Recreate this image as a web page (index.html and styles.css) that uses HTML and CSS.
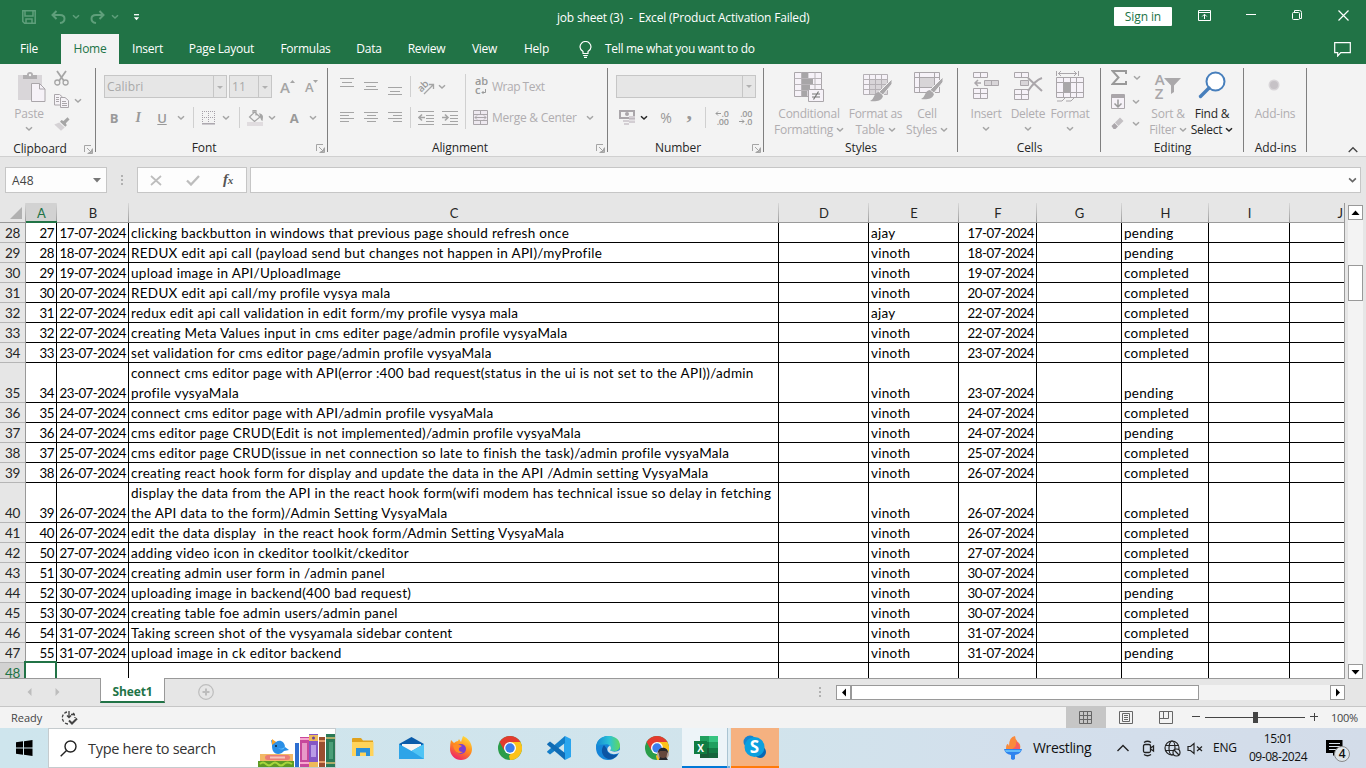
FILE: index.html
```html
<!DOCTYPE html>
<html lang="en">
<head>
<meta charset="utf-8">
<title>job sheet (3) - Excel</title>
<link rel="stylesheet" href="styles.css">
</head>
<body>
<svg class="sprite" aria-hidden="true">
  <symbol id="chev" viewBox="0 0 8 6"><path d="M1 1.2l3 2.8 3-2.8" fill="none" stroke="currentColor" stroke-width="1.5"/></symbol>
  <symbol id="launch" viewBox="0 0 9 9"><path d="M.5 7V.5H7M3 3l4 4M8.500 3.500v5h-5M7.500 4.500v3h-3" fill="none" stroke="#a5a5a5"/></symbol>
  <symbol id="chrome" viewBox="0 0 24 24"><circle cx="12" cy="12" r="12" fill="#2a9d4a"/><path d="M22.400 6A12 12 0 0 1 12 24l-1-4 6-8-4-6z" fill="#fcc21b"/><path d="M1.600 6A12 12 0 0 1 22.400 6H12L6 14z" fill="#e33b2e"/><circle cx="12" cy="12" r="6" fill="#fff"/><circle cx="12" cy="12" r="4.700" fill="#3b7ded"/></symbol>
</svg>

<header class="titlebar">
  <div class="qat">
    <svg width="14" height="14" viewBox="0 0 14 14" fill="none" stroke="#5f9f7b" stroke-width="1.500"><path d="M.8.8h12.400v12.400H2.600L.8 11.500zM3 1v5h8V1M4 13V9h6v4"/></svg>
    <svg width="15" height="14" viewBox="0 0 15 14" fill="none" stroke="#5f9f7b" stroke-width="2"><path d="M5.500 1L1.500 5l4 4M2 5h7c6 0 6 7 0 8"/></svg>
    <svg class="qc" width="8" height="6"><use href="#chev"/></svg>
    <svg width="15" height="14" viewBox="0 0 15 14" fill="none" stroke="#5f9f7b" stroke-width="2"><path d="M9.500 1l4 4-4 4M13 5H6C0 5 0 12 6 13"/></svg>
    <svg class="qc" width="8" height="6"><use href="#chev"/></svg>
    <svg class="more" width="7" height="7" viewBox="0 0 7 7"><path d="M1 .7h5" stroke="#fff" stroke-width="1.300"/><path d="M.8 3.200h5.400L3.500 6.200z" fill="#fff"/></svg>
  </div>
  <div class="doc">job sheet (3)&nbsp; -&nbsp; Excel (Product Activation Failed)</div>
  <button class="signin">Sign in</button>
  <div class="winbtns">
    <svg width="13" height="11" viewBox="0 0 13 11" fill="none" stroke="#fff"><path d="M.5.5h12v10H.5zM.5 2.500h12M6.500 9V4.500M4.200 6.500l2.300-2.300 2.300 2.300"/></svg>
    <svg width="10" height="11" viewBox="0 0 10 11" stroke="#fff"><path d="M0 4.500h10"/></svg>
    <svg width="10" height="11" viewBox="0 0 10 11" fill="none" stroke="#fff"><rect x=".5" y="2.500" width="7" height="7" rx="1"/><path d="M2.500 2.500V.5h5q2 0 2 2v6H8"/></svg>
    <svg width="11" height="11" viewBox="0 0 11 11" stroke="#fff" stroke-width="1.200"><path d="M.5.5l10 10M10.500.5l-10 10"/></svg>
  </div>
</header>

<nav class="tabs">
  <span class="tab">File</span><span class="tab active">Home</span><span class="tab">Insert</span><span class="tab">Page Layout</span><span class="tab">Formulas</span><span class="tab">Data</span><span class="tab">Review</span><span class="tab">View</span><span class="tab">Help</span>
  <svg class="bulb" width="13" height="17" viewBox="0 0 13 17" fill="none" stroke="#fff" stroke-width="1.200"><path d="M4 12.500V10.500C2 9 1 7.500 1 6a5.500 5.500 0 0 1 11 0c0 1.500-1 3-3 4.500v2zM4.200 14.500h4.600M5 16.400h3"/></svg>
  <span class="tell">Tell me what you want to do</span>
  <svg class="comment" width="17" height="15" viewBox="0 0 17 15" fill="none" stroke="#fff" stroke-width="1.200"><path d="M.7.7h15.600v10H6.800L3.700 14v-3.300h-3z"/></svg>
</nav>

<section class="ribbon">
  <div class="group g-clip">
    <div class="body">
      <div class="big paste">
        <svg width="29" height="32" viewBox="0 0 29 32"><path d="M1 5h24v25H1z" fill="#d9d6d9"/><path d="M6 5h4q0-3 3-3t3 3h4v4H6z" fill="#b0aeb0"/><circle cx="13" cy="5" r="1.200" fill="#f3f3f3"/><path d="M14.500 13.500h8l5.500 5.500v12.500H14.500z" fill="#f6f2f8" stroke="#aaa6aa"/><path d="M22.500 13.500V19H28" fill="none" stroke="#aaa6aa"/></svg>
        <span>Paste</span><svg class="ch" width="8" height="6"><use href="#chev"/></svg>
      </div>
      <div class="clipcol">
        <div><svg width="15" height="16" viewBox="0 0 15 16" fill="none" stroke="#a5a5a5"><path d="M3 1l7 10M12 1L5 11" stroke-width="1.800"/><circle cx="3.300" cy="12.500" r="2.500" stroke-width="1.300"/><circle cx="11.600" cy="12.500" r="2.500" stroke-width="1.300"/></svg></div>
        <div><svg width="15" height="14" viewBox="0 0 15 14" fill="#f6f3f7" stroke="#aaa6aa"><path d="M.5.5h5L8.500 3v8h-8zM2 3.500h3M2 5.500h3M2 7.500h3"/><path d="M6.500 3.500H11l3.500 3v7h-8zM8 7.500h4M8 9.500h5M8 11.500h5"/></svg><svg class="ch cc" width="8" height="6"><use href="#chev"/></svg></div>
        <div><svg width="16" height="14" viewBox="0 0 16 14"><path d="M15.500 2.500L13.500.3 9.500 4l-2-1L6 4.700l5.300 5 1.500-1.500-1-2z" fill="#a5a5a5"/><path d="M5.200 5.500L.3 7.500 7 13.800l3.700-3.300z" fill="#d5d2d5"/></svg></div>
      </div>
    </div>
    <div class="label">Clipboard<svg width="9" height="9"><use href="#launch"/></svg></div>
  </div>

  <div class="group g-font">
    <div class="body stack">
      <div class="row font1">
        <div class="combo"><span>Calibri</span><i></i></div>
        <div class="combo"><span>11</span><i></i></div>
        <div class="grow"><b>A</b><svg width="5" height="3"><path d="M0 3L2.500 0 5 3z" fill="#a5a5a5"/></svg></div>
        <div class="grow small"><b>A</b><svg width="5" height="3"><path d="M0 0h5L2.500 3z" fill="#a5a5a5"/></svg></div>
      </div>
      <div class="row font2">
        <b>B</b><em>I</em><u>U</u><svg class="ch" width="8" height="6"><use href="#chev"/></svg><s></s>
        <svg width="14" height="14" viewBox="0 0 14 14" fill="none" stroke="#a5a0a8"><path d="M.5 0v12M6.500 0v12M12.500 0v12M0 .5h13M0 6.500h13" stroke-dasharray="1 1"/><path d="M0 12.800h13" stroke-width="1.400"/></svg>
        <svg class="ch" width="8" height="6"><use href="#chev"/></svg><s></s>
        <svg width="17" height="16" viewBox="0 0 17 16" fill="none" stroke="#a5a5a5" stroke-width="1.200"><path d="M7.500 2L13 7l-5.500 4.500-5-4.500zM6 4V.6h3v5"/><path d="M13 4c3 1 2.500 3 2 6-1-1-1.500-3-2-6z" fill="#a5a5a5"/><path d="M0 14h16" stroke="#e0dcdf" stroke-width="4"/></svg>
        <svg class="ch" width="8" height="6"><use href="#chev"/></svg><b>A</b><svg class="ch" width="8" height="6"><use href="#chev"/></svg>
      </div>
    </div>
    <div class="label">Font<svg width="9" height="9"><use href="#launch"/></svg></div>
  </div>

  <div class="group g-align">
    <div class="body alignbody">
      <div class="stack">
        <div class="row al1">
          <svg width="14" height="20" stroke="#a5a5a5"><path d="M0 1.500h14M2 5.500h10M0 9.500h14"/></svg>
          <svg width="14" height="20" stroke="#a5a5a5"><path d="M0 5.500h14M2 9.500h10M0 12.500h14"/></svg>
          <svg width="14" height="20" stroke="#a5a5a5"><path d="M0 10.500h14M2 14.500h10M0 17.500h14"/></svg><s></s>
          <svg width="17" height="16" viewBox="0 0 17 16" overflow="visible"><text class="abt" x="0" y="10" transform="rotate(-45 6 8)">ab</text><path d="M6 15l9-9M11 5.500h4.500V10" fill="none" stroke="#a5a5a5" stroke-width="1.300"/></svg>
          <svg class="ch" width="8" height="6"><use href="#chev"/></svg>
        </div>
        <div class="row al2">
          <svg width="14" height="11" stroke="#a5a5a5"><path d="M0 .5h14M0 3.500h9M0 6.500h14M0 9.500h9"/></svg>
          <svg width="14" height="11" stroke="#a5a5a5"><path d="M0 .5h14M3 3.500h9M0 6.500h14M3 9.500h9"/></svg>
          <svg width="14" height="11" stroke="#a5a5a5"><path d="M0 .5h14M5 3.500h9M0 6.500h14M5 9.500h9"/></svg><s></s>
          <svg width="16" height="14" fill="none" stroke="#a5a5a5"><path d="M0 .5h16M8 4.500h8M8 7.500h8M8 10.500h8M0 13.500h16"/><path d="M7 6.500H1M4 3.500l-3 3 3 3" stroke-width="1.600"/></svg>
          <svg width="16" height="14" fill="none" stroke="#a5a5a5"><path d="M0 .5h16M8 4.500h8M8 7.500h8M8 10.500h8M0 13.500h16"/><path d="M0 6.500h6M3 3.500l3 3-3 3" stroke-width="1.600"/></svg>
        </div>
      </div>
      <s class="tall"></s>
      <div class="stack wrapcol">
        <div class="row"><div class="abc"><span>ab</span><span>c<svg width="5" height="6" fill="none" stroke="#999"><path d="M4.500 0v3.500H1M2.500 2L1 3.500 2.500 5"/></svg></span></div><span class="wt">Wrap Text</span></div>
        <div class="row"><svg width="15" height="15" fill="#eee9f0" stroke="#aaa6aa"><path d="M.5.5h14v14H.5zM.5 4.500h14M.5 10.500h14M7.500.5v4M7.500 10.500v4M2 7.500h11M4 5.500l-2 2 2 2M11 5.500l2 2-2 2"/></svg><span>Merge &amp; Center</span><svg class="ch" width="8" height="6"><use href="#chev"/></svg></div>
      </div>
    </div>
    <div class="label">Alignment<svg width="9" height="9"><use href="#launch"/></svg></div>
  </div>

  <div class="group g-num">
    <div class="body stack">
      <div class="row num1"><div class="combo"><span></span><i></i></div></div>
      <div class="row num2">
        <svg width="17" height="17"><path d="M1 2h14v7H1z" fill="#f3f3f3" stroke="#aaa6aa" stroke-width="2"/><circle cx="8" cy="5" r="2" fill="#aaa6aa"/><path d="M10 8h6M10 10.500h6M10 13h6M4 12h6M5 15h5" stroke="#d3ced3" stroke-width="2"/></svg>
        <svg class="ch dark" width="8" height="6"><use href="#chev"/></svg><span class="pct">%</span><span class="comma">,</span><s></s>
        <div class="dec"><span><svg width="6" height="5" fill="none" stroke="#999"><path d="M6 2.500H1M3 .5l-2 2 2 2"/></svg>.0</span><span>.00</span></div>
        <div class="dec"><span>.00</span><span><svg width="6" height="5" fill="none" stroke="#999"><path d="M0 2.500h5M3 .5l2 2-2 2"/></svg>.0</span></div>
      </div>
    </div>
    <div class="label">Number<svg width="9" height="9"><use href="#launch"/></svg></div>
  </div>

  <div class="group g-styles">
    <div class="body">
      <div class="big"><svg width="30" height="32" viewBox="0 0 30 32"><path d="M.5 2.500h27v24H.5z" fill="#f6f2f8" stroke="#aaa6aa"/><path d="M.5 8.500h27M.5 14.500h27M.5 20.500h27M7.500 2.500v24M14 2.500v24M21 2.500v24" stroke="#b9b5b9"/><path d="M8 3h6v5H8zM8 9h11v5H8zM8 15h8v5H8zM8 21h5v5H8z" fill="#a7a5a7"/><path d="M14.500 19.500h15v12h-15z" fill="#f6f2f8" stroke="#aaa6aa"/><path d="M18 24h8M18 27h8M24.500 21.500l-5 8" stroke="#777" stroke-width="1.200"/></svg><span>Conditional</span><span>Formatting<svg class="ch" width="8" height="6"><use href="#chev"/></svg></span></div>
      <div class="big"><svg width="30" height="32" viewBox="0 0 30 32"><path d="M.5 4.500h24v20H.5z" fill="#f6f2f8"/><path d="M7 10h17v14H7z" fill="#d8d5d8"/><path d="M.5 4.500h24v20H.5zM.5 9.500h24M.5 14.500h24M.5 19.500h24M6.500 4.500v20M12.500 4.500v20M18.500 4.500v20" fill="none" stroke="#b5b1b5"/><path d="M29 9v5l-9 11-4-3z" fill="#aaa8aa" stroke="#f3f3f3"/><path d="M16 22l4 4c-1 5-8 6-13 5 5-2 3-8 9-9z" fill="#aaa8aa"/></svg><span>Format as</span><span>Table<svg class="ch" width="8" height="6"><use href="#chev"/></svg></span></div>
      <div class="big"><svg width="30" height="32" viewBox="0 0 30 32"><path d="M.5 2.500h25v20H.5z" fill="#f6f2f8"/><path d="M6 7h15v11H6z" fill="#d8d5d8"/><path d="M.5 2.500h25v20H.5zM.5 7.500h25M.5 17.500h25M5.500 2.500v20M20.500 2.500v20" fill="none" stroke="#aaa6aa"/><path d="M29 7v5l-9 11-4-3z" fill="#aaa8aa" stroke="#f3f3f3"/><path d="M16 20l4 4c-1 5-8 6-13 5 5-2 3-8 9-9z" fill="#aaa8aa"/></svg><span>Cell</span><span>Styles<svg class="ch" width="8" height="6"><use href="#chev"/></svg></span></div>
    </div>
    <div class="label plain">Styles</div>
  </div>

  <div class="group g-cells">
    <div class="body">
      <div class="big"><svg width="28" height="32" viewBox="0 0 28 32" fill="#f6f2f8" stroke="#aaa6aa"><path d="M1.500 2.500h14v5h-14zM8.500 2.500v5M1.500 18.500h14v10h-14zM8.500 18.500v10M1.500 23.500h14"/><path d="M12.500 10.500h14v5h-14zM19.500 10.500v5" fill="#d8d5d8"/><path d="M9 13H3M6 10l-3 3 3 3" fill="none" stroke-width="1.500"/></svg><span>Insert</span><svg class="ch" width="8" height="6"><use href="#chev"/></svg></div>
      <div class="big"><svg width="30" height="32" viewBox="0 0 30 32" fill="#f6f2f8" stroke="#aaa6aa"><path d="M1.500 2.500h14v5h-14zM8.500 2.500v5M1.500 19.500h14v10h-14zM8.500 19.500v10M1.500 24.500h14"/><path d="M7.500 10.500h8v5h-8z" fill="#d8d5d8"/><path d="M15 8l14 13M29 8c-6 2-10 7-14 13" fill="none" stroke-width="2"/></svg><span>Delete</span><svg class="ch" width="8" height="6"><use href="#chev"/></svg></div>
      <div class="big"><svg width="28" height="32" viewBox="0 0 28 32" fill="#f6f2f8" stroke="#aaa6aa"><path d="M.5 7.500h27v20H.5z"/><path d="M8 13h7v9H8z" fill="#a9a7a9" stroke="none"/><path d="M.5 12.500h27M.5 22.500h27M7.500 7.500v20M14.500 7.500v20M20.500 7.500v20M.5 1v5M22.500 1v5M2 3.500h19M5 1L2.500 3.500 5 6M18 1l2.500 2.500L18 6M1 31h5l3-3M10 31h5l3-3" fill="none"/></svg><span>Format</span><svg class="ch" width="8" height="6"><use href="#chev"/></svg></div>
    </div>
    <div class="label plain">Cells</div>
  </div>

  <div class="group g-edit">
    <div class="body">
      <div class="editcol">
        <div><svg width="16" height="15"><path d="M15 4V1H1.500l6 6.500-6 6.500H15v-3" fill="none" stroke="#999" stroke-width="2"/></svg><svg class="ch" width="8" height="6"><use href="#chev"/></svg></div>
        <div><svg width="15" height="15"><path d="M.5.5h13v14H.5z" fill="#f6f2f8" stroke="#aaa6aa"/><path d="M1 1h12v3H1z" fill="#aaa6aa"/><path d="M7 5.500v7M3.500 9.500L7 13l3.500-3.500" fill="none" stroke="#999" stroke-width="1.500"/></svg><svg class="ch" width="8" height="6"><use href="#chev"/></svg></div>
        <div><svg width="15" height="14"><path d="M9 .5l3.500 3.500-5 5L4 5.500z" fill="#c3c0c3"/><path d="M3.500 6L7 9.500 4.500 12h-2L.5 9z" fill="#aaa6aa"/></svg><svg class="ch" width="8" height="6"><use href="#chev"/></svg></div>
      </div>
      <div class="big"><div class="az"><b>A<br>Z</b><svg width="17" height="16"><path d="M0 0h17l-7 7.500V14l-3 2V7.500z" fill="#aaa8aa"/></svg></div><span>Sort &amp;</span><span>Filter<svg class="ch" width="8" height="6"><use href="#chev"/></svg></span></div>
      <div class="big on"><svg width="28" height="32" viewBox="0 0 28 32"><circle cx="17.500" cy="11.500" r="9" fill="#fff" stroke="#477fbc" stroke-width="2"/><path d="M2.500 26.500l8.500-8.500" stroke="#477fbc" stroke-width="3.400" stroke-linecap="round"/></svg><span>Find &amp;</span><span>Select<svg class="ch dark" width="8" height="6"><use href="#chev"/></svg></span></div>
    </div>
    <div class="label plain">Editing</div>
  </div>

  <div class="group g-add">
    <div class="body"><div class="big"><svg width="30" height="32"><circle cx="14" cy="15" r="5.500" fill="#d8d5d8"/><circle cx="14" cy="15" r="4" fill="#c6c2c6"/></svg><span>Add-ins</span></div></div>
    <div class="label plain">Add-ins</div>
  </div>
  <svg class="collapse" width="10" height="7"><path d="M.7 6L5 1.700 9.300 6" fill="none" stroke="#444" stroke-width="1.300"/></svg>
</section>

<section class="formulabar">
  <div class="namebox"><span>A48</span><svg width="8" height="5"><path d="M0 0h8L4 4.500z" fill="#777"/></svg></div>
  <div class="dots"><i></i><i></i><i></i></div>
  <div class="fx">
    <svg width="12" height="11"><path d="M1 1l10 9M11 1L1 10" stroke="#bdbdbd" stroke-width="1.700"/></svg>
    <svg width="14" height="11"><path d="M1 5.500l4 4L13 1" fill="none" stroke="#bdbdbd" stroke-width="2.300"/></svg>
    <span>f<small>x</small></span>
  </div>
  <div class="formula"><svg class="ch" width="9" height="7"><use href="#chev"/></svg></div>
</section>

<main class="work">
  <div class="sheet">
    <div class="r head"><div class="corner"><svg width="12" height="12"><path d="M12 0v12H0z" fill="#b1b1b1"/></svg></div><div class="sel">A</div><div>B</div><div>C</div><div>D</div><div>E</div><div>F</div><div>G</div><div>H</div><div>I</div><div class="j">J</div></div>
    <div class="rows" id="rows"></div>
  </div>
  <div class="vscroll"><span class="btn"><svg width="9" height="6"><path d="M4.500.5L8.500 5h-8z"/></svg></span><div class="track"><div class="thumb"></div></div><span class="btn"><svg width="9" height="6"><path d="M4.500 5.500L.5 1h8z"/></svg></span></div>
</main>

<div class="sheettabs">
  <svg class="n1" width="5" height="8"><path d="M4.500 0v8L.5 4z" fill="#bdbdbd"/></svg>
  <svg class="n2" width="5" height="8"><path d="M.5 0v8l4-4z" fill="#bdbdbd"/></svg>
  <div class="stab">Sheet1</div>
  <svg class="plus" width="16" height="16" fill="none" stroke="#bdbdbd"><circle cx="8" cy="8" r="7.300" stroke-width="1.200"/><path d="M8 4.500v7M4.500 8h7" stroke-width="2"/></svg>
  <div class="dots"><i></i><i></i><i></i></div>
  <div class="hscroll"><span class="btn"><svg width="6" height="9"><path d="M5 .5v8L1 4.500z"/></svg></span><div class="thumb"></div><span class="btn end"><svg width="6" height="9"><path d="M1 .5v8l4-4z"/></svg></span></div>
</div>

<footer class="status">
  <span class="ready">Ready</span>
  <svg width="17" height="16" fill="none" stroke="#444" stroke-width="1.300"><path d="M6 2A6 6 0 0 0 3 12M7 14q-2 0-3-1M12 3q2 2 2 5" stroke-dasharray="3 1.500"/><path d="M8 1v6M6 5.500L8 7.500l2-2M10 4.500h4"/><path d="M8 10.500l3 3 5-5" stroke-width="2"/></svg>
  <div class="views">
    <span class="v on"><svg width="13" height="13" fill="none" stroke="#666"><path d="M.5.5h12v12H.5zM.5 4.500h12M.5 8.500h12M4.500.5v12M8.500.5v12"/></svg></span>
    <span class="v"><svg width="14" height="13" fill="none" stroke="#666"><path d="M.5.5h13v12H.5zM3.500 2.500h7v8h-7zM5 4.500h4M5 6.500h4M5 8.500h4"/></svg></span>
    <span class="v"><svg width="14" height="13" fill="none" stroke="#666"><path d="M.5.5h13v12H.5zM4.500.5v7M9.500.5v7M.5 7.500h9"/></svg></span>
  </div>
  <svg class="zoom" width="126" height="13"><path d="M0 5.500h8M13 6.500h100M118 5.500h8M122.500 2v8" stroke="#444"/><path d="M61 1h5v11h-5z" fill="#444"/></svg>
  <span class="pc">100%</span>
</footer>

<div class="taskbar">
  <div class="start"><svg width="17" height="16"><path d="M0 2.300l7-1v6.200H0zM8 1.200l8.500-1.200v7.500H8zM0 8.500h7v6.200l-7-1zM8 8.500h8.500V16L8 14.800z"/></svg></div>
  <div class="search">
    <svg width="17" height="17" fill="none" stroke="#222" stroke-width="1.400"><circle cx="10.500" cy="6.500" r="5.500"/><path d="M6.500 10.500L.7 16.300"/></svg>
    <span>Type here to search</span>
    <svg class="books" width="77" height="35" viewBox="0 0 77 35">
      <path d="M2 21h33v7H2z" fill="#f2b866"/><rect x="7" y="22" width="25" height="5" rx="2.500" fill="#ea7d77"/><path d="M12 24.500h15" stroke="#f8c6bd" stroke-width="2"/><path d="M0 28h36v7H0z" fill="#5d9a24"/><path d="M2 31q3-3 6 0t6 0 6 0 6 0 8 0" fill="none" stroke="#a5d63c" stroke-width="2"/>
      <path d="M14 12L13 7l5 2c4-3 9 0 9 5l4 3-5 1c-3 4-9 4-11 0-1-2-1-4-1-6z" fill="#2a8fe6"/><path d="M14 6l4 3-4 3z" fill="#f6a12b"/><circle cx="18" cy="13" r="1" fill="#123"/><path d="M20 15q5 2 7-2-1 6-7 2z" fill="#5fc0ff"/>
      <path d="M37 10h4v25h-4z" fill="#2d6ed0"/><path d="M42 4h9v31h-9z" fill="#c7489b"/><path d="M42 6h9M42 30h9" stroke="#f6a8cf" stroke-width="2"/><path d="M44 10h5v17h-5z" fill="#e89ac8"/>
      <path d="M51 1h9v34h-9z" fill="#8456c5"/><path d="M51 2h9v6h-9zM51 29h9v6h-9z" fill="#edba5a"/><path d="M53 12h5v12h-5z" fill="#b99be6"/><circle cx="55.500" cy="5" r="1.500" fill="#6a4298"/>
      <path d="M61 4h6v31h-6z" fill="#9b4f30"/><path d="M61 8h6M61 29h6" stroke="#e49a68" stroke-width="2"/><path d="M68 1h9v34h-9z" fill="#2a7a58"/><path d="M68 5h9M68 30h9" stroke="#d9bf70" stroke-width="1.500"/><path d="M71 9h4v17h-4z" fill="#4b9e78"/>
    </svg>
  </div>
  <div class="apps">
    <span class="app"><svg width="22" height="20" viewBox="0 0 22 20"><path d="M0 1q0-1 1-1h8l2 2.500h10v6H0z" fill="#e0a11c"/><path d="M0 4h21.500v14H0z" fill="#ffd35a"/><path d="M4 10h14v8h-4v-3.500H8V18H4z" fill="#2b8fd8"/></svg></span>
    <span class="app"><svg width="25" height="24" viewBox="0 0 25 24"><path d="M0 8L12.500 1 25 8v5H0z" fill="#0a5baa"/><path d="M3 8h19v8H3z" fill="#f5f5f5"/><path d="M0 8l12.500 7L25 8v15H0z" fill="#2da4e8"/><path d="M25 8v15L12.500 15z" fill="#50c4f5"/></svg></span>
    <span class="app"><svg width="24" height="24" viewBox="0 0 24 24"><defs><linearGradient id="ff" x1=".8" y1="0" x2=".3" y2="1"><stop offset="0" stop-color="#ffe33d"/><stop offset=".5" stop-color="#ff8a1e"/><stop offset="1" stop-color="#ee1f6b"/></linearGradient></defs><path d="M2 4l3 3q2-2 4-2l1-2 2 3 2-6c5 2 9 7 9 13a11 11 0 0 1-22 0Q1 8 2 4z" fill="url(#ff)"/><circle cx="12" cy="13" r="5" fill="#7b3fd0"/><path d="M4 9q5-2 9 1l-3 2q-1 4 4 4c-4 3-9 0-10-7z" fill="#ff8c26"/></svg></span>
    <span class="app"><svg width="24" height="24"><use href="#chrome"/></svg></span>
    <span class="app"><svg width="24" height="24" viewBox="0 0 24 24"><path d="M18 0l6 3v18l-6 3-1-6V6z" fill="#2aa5ee"/><path d="M18 0v7L3 18.500.5 16.500 0 15.500z" fill="#147ec8"/><path d="M18 24v-7L3 5.500.5 7.500 0 8.500z" fill="#0f6cb5"/></svg></span>
    <span class="app"><svg width="24" height="24" viewBox="0 0 24 24"><defs><linearGradient id="eg"><stop offset="0" stop-color="#1387d5"/><stop offset=".55" stop-color="#2cc3d6"/><stop offset="1" stop-color="#62d85b"/></linearGradient></defs><circle cx="12" cy="12" r="12" fill="#1585d8"/><path d="M0 11C1-4 24-3 24 9.500c0 5-5 7-10 5 3-3-1-7-5-6C4 8 1 10 0 11z" fill="url(#eg)"/><path d="M8 9c-6 8 2 16 8 14 3-1 5-3 6-5-5 2-11 0-11-5z" fill="#0c55a4"/><path d="M14 9.500q-4 2-2 6 3 4 10 2l2-1.500V14q-5 3-10 .5 2-2 0-5z" fill="#d2e3eb"/></svg></span>
    <span class="app"><svg width="24" height="24" viewBox="0 0 24 24"><use href="#chrome"/><circle cx="18" cy="18" r="6" fill="#b2a096"/><path d="M13.500 16c0-5 9-5 9 0l-1 5c-1 2-6 2-7 0z" fill="#65483c"/><path d="M13 17c0-7 10-7 10 0l-2-2h-6zM14 24l1-3q3 2 6 0l2 3z" fill="#25262b"/></svg></span>
    <span class="app excel"><svg width="24" height="22" viewBox="0 0 24 22"><path d="M6 0h18v22H6z" fill="#1f9f5e"/><path d="M15 0h9v6h-9z" fill="#36c481"/><path d="M6 6h9v6H6zM15 12h9v5h-9z" fill="#127c45"/><path d="M6 12h9v10H6z" fill="#185c37"/><path d="M15 17h9v5h-9z" fill="#14653c"/><path d="M0 5h13v13H0z" fill="#107c41"/><text x="6.500" y="15.500" class="glyph">X</text></svg></span>
    <span class="seam"></span>
    <span class="app skype"><svg width="24" height="24" viewBox="0 0 24 24"><circle cx="7" cy="7" r="6.500" fill="#1684d0"/><circle cx="17" cy="17" r="6" fill="#0868b5"/><circle cx="11.500" cy="12" r="10" fill="#0ba0df"/><text x="11.500" y="18" class="glyph s">S</text></svg></span>
  </div>
  <div class="tray">
    <svg width="18" height="24" viewBox="0 0 18 24"><path d="M2 13q0-5 2-5l1 2q0-9 6-10 0 4 4 7 2 2 1 6z" fill="#fa8a3c"/><path d="M8 13q5-2 4-8 4 3 4 8z" fill="#f65d64"/><path d="M0 13h18q-1 5-7 6v4l-2 1-2-1v-4q-6-1-7-6z" fill="#2f83ee"/><path d="M1 14h16l-1 2H2z" fill="#61bbfb"/></svg>
    <span class="news">Wrestling</span>
    <svg width="12" height="8" fill="none" stroke="#222" stroke-width="1.400"><path d="M.5 7L6 1.500 11.500 7"/></svg>
    <svg width="13" height="17" fill="none" stroke="#222" stroke-width="1.300"><rect x="1.500" y="4.500" width="7" height="8" rx="1.500"/><path d="M8.500 8l3-2v5l-3-2M2 2.500Q5.500 0 9 2.500M2 14.500q3.500 2.500 7 0"/></svg>
    <svg width="17" height="17" fill="none" stroke="#222" stroke-width="1.200"><circle cx="8" cy="8" r="7"/><ellipse cx="8" cy="8" rx="3" ry="7"/><path d="M1.500 5.500h13M1.500 10.500h13"/><circle cx="12.500" cy="12.500" r="3.500" fill="#d4dfec"/><path d="M10 10l5 5"/></svg>
    <svg width="16" height="13" fill="none" stroke="#222" stroke-width="1.200"><path d="M1 4.500h2.500L7 1.500v10l-3.500-3H1zM10 4.500l5 4.500M15 4.500L10 9"/></svg>
    <span class="eng">ENG</span>
    <span class="clock">15:01<br>09-08-2024</span>
    <div class="note"><svg width="17" height="16"><path d="M0 0h16.500v13H10l-3 3v-3H0z"/><path d="M3 3.500h11M3 6.500h11M3 9.500h7" stroke="#d4dfec"/></svg><span>4</span></div>
  </div>
</div>
<script src="script.js"></script>
</body>
</html>
```
FILE: styles.css
```css
* { box-sizing: border-box; }
body { margin: 0; width: 1366px; height: 768px; overflow: hidden; font: 12px/16px "Open Sans", "Noto Sans", sans-serif; letter-spacing: -0.25px; color: #262626; background: #e6e6e6; display: flex; flex-direction: column; }
svg { flex: none; display: block; }
.sprite { position: absolute; width: 0; height: 0; }
.ch { color: #a5a5a5; }
.ch.dark { color: #262626; }

.titlebar { height: 34px; flex: none; background: #217346; color: #fff; display: grid; grid-template-columns: 557px 557px 58px 1fr; }
.qat { padding: 9px 0 0 22px; display: grid; grid-template-columns: 29px 21px 18px 21px 22px 8px; align-items: center; height: 25px; }
.qc { color: #5f9f7b; }
.doc { padding-top: 10px; white-space: nowrap; letter-spacing: -0.19px; }
.signin { margin: 7px 0 0; height: 19px; border: 0; border-radius: 1px; background: #fff; color: #217346; font: inherit; line-height: 18px; padding: 0; letter-spacing: -0.1px; }
.winbtns { padding: 10px 0 0 26px; display: grid; grid-template-columns: 48px 46px 46px 12px; align-items: start; }

.tabs { height: 30px; flex: none; background: #217346; color: #fff; display: flex; align-items: center; }
.tab { height: 30px; line-height: 30px; text-align: center; white-space: nowrap; }
.tab:nth-child(1) { width: 58px; margin-right: 3px; }
.tab:nth-child(2) { width: 58px; background: #f3f3f3; color: #217346; }
.tab:nth-child(3) { width: 57px; }
.tab:nth-child(4) { width: 91px; }
.tab:nth-child(5) { width: 77px; }
.tab:nth-child(6) { width: 50px; }
.tab:nth-child(7) { width: 65px; }
.tab:nth-child(8) { width: 51px; }
.tab:nth-child(9) { width: 53px; }
.bulb { margin-left: 16px; }
.tell { margin-left: 13px; letter-spacing: -0.3px; }
.comment { margin-left: auto; margin-right: 15px; }

.ribbon { height: 93px; flex: none; background: #f3f3f3; border-bottom: 1px solid #d0d0d0; display: flex; color: #b0adb0; }
.group { flex: none; display: flex; flex-direction: column; background: linear-gradient(#7f7f7f, #7f7f7f) 100% 4px / 1px 84px no-repeat; }
.g-clip { width: 96px; }
.g-font { width: 232px; }
.g-align { width: 280px; }
.g-num { width: 156px; }
.g-styles { width: 194px; }
.g-cells { width: 143px; }
.g-edit { width: 143px; }
.g-add { width: 63px; }
.body { height: 76px; display: flex; }
.label { height: 17px; line-height: 16px; padding: 1px 3px 0 0; color: #262626; display: grid; grid-template-columns: 1fr 13px; align-items: center; justify-items: center; letter-spacing: -0.1px; }
.label svg { justify-self: end; }
.label.plain { display: block; padding: 1px 0 0; text-align: center; }
.stack { display: flex; flex-direction: column; }
.row { display: grid; align-items: center; justify-items: center; height: 23px; margin-top: 11px; }
.row + .row { height: 21px; margin-top: 9px; }
s { width: 1px; height: 21px; background: #d0d0d0; }
.big { padding-top: 6px; display: flex; flex-direction: column; align-items: center; white-space: nowrap; }
.big > svg:first-child, .az { margin-bottom: 3px; }
.big > span { height: 16px; padding-top: 1px; display: flex; align-items: center; gap: 3px; }
.big > .ch { margin-top: 5px; }
.on { color: #262626; }
.paste { width: 58px; }
.paste > svg:first-child { margin-left: 4px; }
.clipcol { margin-left: -4px; padding-top: 6px; display: grid; grid-template-rows: 24px 23px 24px; align-items: start; }
.clipcol div { display: flex; align-items: center; }
.cc { margin-left: 5px; }

.combo { width: 100%; height: 23px; border: 1px solid #c6c6c6; background: #e6e6e6; display: grid; grid-template-columns: 1fr 13px; line-height: 22px; }
.combo span { padding-left: 2px; color: #a9a9a9; letter-spacing: .1px; }
.combo i { border-left: 1px solid #c6c6c6; display: grid; place-items: center; }
.combo i::after { content: ""; border: 3px solid transparent; border-top-color: #b1b1b1; border-bottom: 0; }
.font1 { padding-left: 8px; grid-template-columns: 123px 45px 14px 14px; justify-items: start; }
.font1 .combo:nth-child(2) { margin-left: 2px; width: 43px; }
.font1 .grow { margin-left: 8px; }
.font1 .small { margin-left: 19px; }
.grow { display: flex; color: #a5a5a5; font-size: 15px; }
.grow svg { margin-top: 1px; }
.grow b { font-weight: 600; }
.grow.small { font-size: 13px; }
.font2 { padding-left: 6px; grid-template-columns: 24px 24px 24px 13px 12px 20px 14px 12px 20px 14px 30px 8px; color: #999; font-size: 13px; }
.font2 em { font-family: "Liberation Serif", serif; font-weight: bold; font-size: 14px; }
.font2 u { font-weight: 600; }

.al1, .al2 { padding-left: 7px; grid-template-columns: 24px 24px 24px 7px 24px 8px; justify-content: start; }
.al2 { grid-template-columns: 24px 24px 24px 7px 24px 24px; }
.abt { font: 600 10px "Open Sans", sans-serif; fill: #999; }
.alignbody .stack:first-child { width: 137px; }
.alignbody .tall { height: 55px; margin-top: 10px; }
.wrapcol .row { grid-template-columns: 19px auto auto; justify-content: start; justify-items: start; padding-left: 7px; }
.wrapcol .wt { letter-spacing: -0.5px; }
.wrapcol .ch { margin-left: 9px; }
.abc { font: 600 11px/8px "Open Sans", sans-serif; color: #999; margin: -3px 0 0 2px; }
.abc span { display: flex; height: 9px; gap: 1px; align-items: center; }
.abc svg { margin-top: 4px; }
.num1 { padding-left: 8px; grid-template-columns: 140px; justify-content: start; }
.num2 { padding-left: 9px; grid-template-columns: 20px 14px 30px 16px 17px 14px 33px; justify-content: start; color: #999; }
.pct { font-size: 14px; }
.comma { font: bold 22px/10px "Liberation Serif", serif; margin-top: -12px; }
.dec { font: 600 9px/9px "Open Sans", sans-serif; letter-spacing: -0.3px; }
.dec span { display: flex; height: 8px; width: 15px; justify-content: flex-end; align-items: center; }

.g-styles .big:nth-child(1) { width: 90px; }
.g-styles .big:nth-child(2) { width: 43px; }
.g-styles .big:nth-child(3) { width: 60px; }
.g-styles .big:nth-child(n+2) > svg:first-child { margin-left: 4px; }
.g-cells .body { padding-left: 7px; }
.g-cells .big { width: 42px; }
.editcol { width: 46px; padding: 6px 0 0 10px; display: grid; grid-template-rows: 24px 23px 22px; align-items: start; }
.editcol div { display: flex; align-items: center; gap: 6px; }
.g-edit .big { width: 42px; }
.g-edit .on { width: 46px; }
.az { height: 32px; display: flex; align-items: center; color: #a9a7a9; }
.az b { font: 600 15px/14px "Open Sans", sans-serif; }
.g-add .big { width: 62px; }
.collapse { margin: 82px 0 0 41px; }

.formulabar { height: 46px; flex: none; display: flex; padding: 10px 5px 0; }
.namebox, .fx, .formula { height: 26px; border: 1px solid #c6c6c6; background: #fdfdfd; display: flex; align-items: center; }
.namebox { width: 102px; justify-content: space-between; padding: 1px 5px 0 6px; color: #444; letter-spacing: .2px; }
.dots { display: flex; flex-direction: column; gap: 2px; }
.dots i { width: 2px; height: 2px; background: #b1b1b1; }
.formulabar .dots { margin: 8px 14px 0; }
.fx { width: 110px; padding-left: 12px; gap: 24px; color: #555; }
.fx span { font: italic bold 15px "Liberation Serif", serif; margin-top: -2px; margin-left: -1px; }
.fx small { font-size: 11px; }
.formula { width: 1111px; margin-left: 3px; justify-content: flex-end; padding-right: 3px; }
.formula .ch { color: #666; }

.work { height: 476px; flex: none; display: flex; }
.sheet { width: 1345px; border-right: 1px solid #999; border-bottom: 1px solid #999; overflow: hidden; font: 13.5px/20px Lato, "Open Sans", sans-serif; color: #000; letter-spacing: .29px; font-variant-ligatures: none; }
.r { display: grid; grid-template-columns: 26px 31px 72px 650px 90px 90px 78px 85px 87px 81px 55px; grid-template-rows: 100%; height: 20px; }
.r.two { height: 40px; }
.r > div { border-right: 1px solid #000; box-shadow: inset 0 -1px #000; padding: 0 2px; white-space: pre; display: flex; align-items: flex-end; background: #fff; }
.r > div.n { justify-content: flex-end; padding-right: 2px; font-size: 13.3px; letter-spacing: -0.52px; }
.r > div.h { background: #e6e6e6; border-color: #999; box-shadow: inset 0 -1px #b5b5b5; justify-content: center; color: #262626; letter-spacing: -0.3px; }
.r > div:last-child { border-right: 0; }
.r.head > div { background: linear-gradient(#d8d8d8, #999) 100% 0 / 1px 100% no-repeat #e6e6e6; border-right: 0; box-shadow: inset 0 -1px #999; justify-content: center; color: #262626; letter-spacing: 0; font-size: 13px; }
.r.head > div.corner { align-items: flex-end; justify-content: flex-end; padding: 0 4px 4px 0; }
.r.head > div.sel { background-color: #d2d2d2; box-shadow: inset 0 -2px #217346; color: #217346; }
.r.head > div.j { justify-content: flex-end; background: #e6e6e6; }
.last > div.h { background: #d2d2d2; color: #217346; }
.last > div.act { box-shadow: -1px -1px 0 1px #217346, inset -1px 0 #217346; border-color: #217346; z-index: 1; }
.vscroll { width: 15px; margin: 2px 0 0 3px; display: flex; flex-direction: column; }
.btn { width: 15px; height: 15px; flex: none; border: 1px solid #999; background: #fff; display: grid; place-items: center; }
.track { flex: 1; background: #f3f3f3; padding-top: 45px; }
.track .thumb { height: 36px; border: 1px solid #999; background: #fff; }

.sheettabs { height: 28px; flex: none; border-bottom: 1px solid #c6c6c6; display: flex; align-items: flex-start; }
.n1 { margin: 9px 0 0 27px; }
.n2 { margin: 9px 0 0 23px; }
.stab { width: 65px; height: 25px; margin: -1px 0 0 40px; background: #fff; border: solid #999; border-width: 0 1px; border-bottom: 2px solid #217346; color: #217346; font-weight: 700; text-align: center; line-height: 27px; letter-spacing: -0.1px; }
.plus { margin: 5px 0 0 33px; }
.sheettabs .dots { margin: 8px 0 0 605px; }
.hscroll { width: 509px; margin: 6px 0 0 15px; background: #f3f3f3; display: flex; }
.hscroll .thumb { width: 348px; height: 15px; border: 1px solid #999; background: #fff; }
.end { margin-left: auto; }

.status { height: 21px; flex: none; background: #f3f3f3; display: flex; align-items: center; color: #444; font-size: 11px; }
.ready { width: 61px; padding-left: 11px; letter-spacing: 0; }
.views { margin-left: 988px; display: flex; height: 21px; }
.v { width: 40px; display: grid; place-items: center; padding-bottom: 1px; }
.v.on { background: #c6c6c6; padding-right: 1px; }
.zoom { margin-left: 6px; }
.pc { margin-left: 13px; }

.taskbar { height: 40px; flex: none; display: flex; background: linear-gradient(90deg, #cee5ed, #d1e4ec 55%, #d3dfec 75%, #d3dce9); color: #111; }
.start { width: 48px; display: grid; place-items: center; }
.search { width: 288px; border: 1px solid #c5cbce; background: #fff; display: flex; align-items: center; padding-left: 11px; font-size: 14.5px; color: #333; overflow: hidden; }
.search span { margin-left: 11px; padding-top: 1px; width: 171px; white-space: nowrap; letter-spacing: -0.3px; }
.books { margin-top: 5px; }
.apps { display: flex; margin-left: 2px; }
.app { width: 49px; display: grid; place-items: center; }
.app.excel { width: 45px; margin-left: 1px; padding-left: 3px; background: #edf4f8; border-bottom: 2px solid #0078d7; }
.seam { width: 3px; margin-right: 1px; background: #dcebf2; border-left: 1px solid #aac4d2; border-bottom: 2px solid #6faede; }
.app.skype { width: 48px; background: #f5b180; border-bottom: 2px solid #ff7a0a; }
.glyph { font: bold 10px "Open Sans", sans-serif; fill: #fff; text-anchor: middle; letter-spacing: 0; }
.glyph.s { font-size: 17px; }
.tray { margin-left: auto; width: 362px; display: grid; grid-template-columns: 29px 84px 25px 22px 23px 26px 34px 62px 1fr; align-items: center; }
.news { font-size: 14px; letter-spacing: -0.35px; }
.eng { font-size: 12px; }
.clock { text-align: center; line-height: 18px; white-space: nowrap; letter-spacing: -0.45px; }
.note { position: relative; margin-left: 17px; }
.note span { position: absolute; left: 8px; top: 6px; width: 16px; height: 16px; border: 1px solid #888; border-radius: 50%; background: #dfe5ea; text-align: center; line-height: 14px; font-weight: 600; }
```
FILE: script.js
```js
// Row number, serial, day, task lines, person, status
const data = [
  [28, 27, "17", "clicking backbutton in windows that previous page should refresh once", "ajay", "pending"],
  [29, 28, "18", "REDUX edit api call (payload send but changes not happen in API)/myProfile", "vinoth", "pending"],
  [30, 29, "19", "upload image in API/UploadImage", "vinoth", "completed"],
  [31, 30, "20", "REDUX edit api call/my profile vysya mala", "vinoth", "completed"],
  [32, 31, "22", "redux edit api call validation in edit form/my profile vysya mala", "ajay", "completed"],
  [33, 32, "22", "creating Meta Values input in cms editer page/admin profile vysyaMala", "vinoth", "completed"],
  [34, 33, "23", "set validation for cms editor page/admin profile vysyaMala", "vinoth", "completed"],
  [35, 34, "23", "connect cms editor page with API(error :400 bad request(status in the ui is not set to the API))/admin\nprofile vysyaMala", "vinoth", "pending"],
  [36, 35, "24", "connect cms editor page with API/admin profile vysyaMala", "vinoth", "completed"],
  [37, 36, "24", "cms editor page CRUD(Edit is not implemented)/admin profile vysyaMala", "vinoth", "pending"],
  [38, 37, "25", "cms editor page CRUD(issue in net connection so late to finish the task)/admin profile vysyaMala", "vinoth", "completed"],
  [39, 38, "26", "creating react hook form for display and update the data in the API /Admin setting VysyaMala", "vinoth", "completed"],
  [40, 39, "26", "display the data from the API in the react hook form(wifi modem has technical issue so delay in fetching\nthe API data to the form)/Admin Setting VysyaMala", "vinoth", "completed"],
  [41, 40, "26", "edit the data display  in the react hook form/Admin Setting VysyaMala", "vinoth", "completed"],
  [42, 50, "27", "adding video icon in ckeditor toolkit/ckeditor", "vinoth", "completed"],
  [43, 51, "30", "creating admin user form in /admin panel", "vinoth", "completed"],
  [44, 52, "30", "uploading image in backend(400 bad request)", "vinoth", "pending"],
  [45, 53, "30", "creating table foe admin users/admin panel", "vinoth", "completed"],
  [46, 54, "31", "Taking screen shot of the vysyamala sidebar content", "vinoth", "completed"],
  [47, 55, "31", "upload image in ck editor backend", "vinoth", "pending"],
  [48, "", "", "", "", ""]
];
const cell = (text, cls = "") => `<div class="${cls}">${text}</div>`;
document.getElementById("rows").innerHTML = data.map(([row, no, day, task, who, state]) => {
  const date = day && `${day}-07-2024`;
  const kind = task.includes("\n") ? "two" : row === 48 ? "last" : "";
  return `<div class="r ${kind}">` + cell(row, "h") + cell(no, row === 48 ? "n act" : "n") + cell(date, "n") + cell(task) +
    cell("") + cell(who) + cell(date, "n") + cell("") + cell(state) + cell("") + cell("") + "</div>";
}).join("");
```
